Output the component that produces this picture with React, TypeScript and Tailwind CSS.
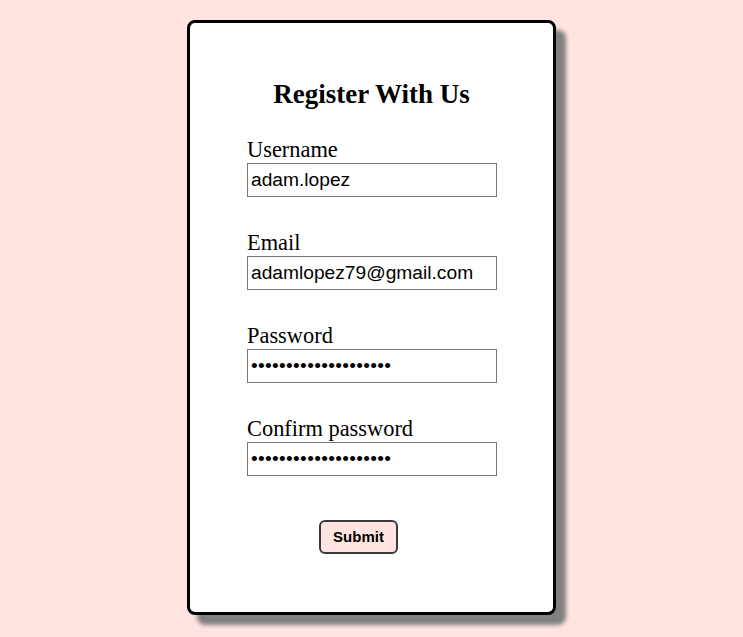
export default function App() {
  const fields = [
    { label: "Username", type: "text", value: "adam.lopez" },
    { label: "Email", type: "email", value: "adamlopez79@gmail.com" },
    { label: "Password", type: "password", value: "abcdefghijklmnopqrst" },
    { label: "Confirm password", type: "password", value: "abcdefghijklmnopqrst" },
  ];

  return (
    <div className="min-h-screen bg-[#ffe4e1] flex justify-center pt-5">
      <div className="w-[369px] h-[595px] bg-white border-[3px] border-black rounded-lg shadow-[10px_10px_4px_#808080] flex flex-col">
        <h2 className="pt-[56px] text-center text-[27px] font-bold font-['Liberation_Serif',serif] leading-[31px] text-black">
          Register With Us
        </h2>
        <form className="flex flex-col pl-[57px] pt-[27px]">
          {fields.map((f) => (
            <div key={f.label} className="flex flex-col mb-[33px]">
              <label className="text-[22.4px] leading-[26px] font-['Liberation_Serif',serif] text-black">
                {f.label}
              </label>
              <input
                type={f.type}
                defaultValue={f.value}
                className={
                  f.type === "password"
                    ? "w-[250px] h-[34px] border border-[#767676] pl-[3px] pr-1 text-[19.2px] tracking-[0.3px] font-['Liberation_Sans',Arial,sans-serif] text-black outline-none"
                    : "w-[250px] h-[34px] border border-[#767676] pl-[3px] pr-1 text-[19.2px] font-['Liberation_Sans',Arial,sans-serif] text-black outline-none"
                }
              />
            </div>
          ))}
          <button
            type="button"
            className="ml-[72px] mt-[11px] w-[79px] h-[34px] self-start bg-[#ffe4e1] border-2 border-[#3a3a3a] rounded-md text-[15px] font-bold font-['Liberation_Sans',Arial,sans-serif] text-black"
          >
            Submit
          </button>
        </form>
      </div>
    </div>
  );
}
